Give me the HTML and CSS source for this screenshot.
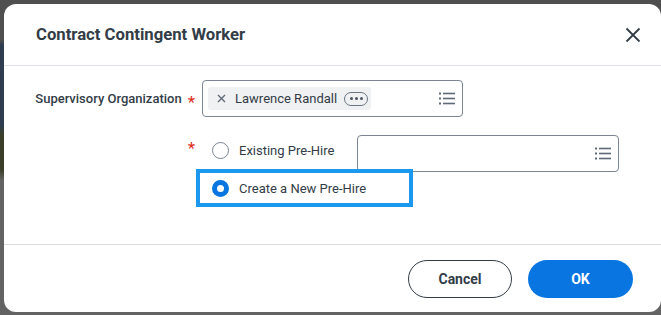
FILE: index.html
```html
<!DOCTYPE html>
<html>
<head>
<meta charset="utf-8">
<link rel="stylesheet" href="styles.css">
</head>
<body>
<div class="dialog">
  <div class="header">
    <h1 class="title">Contract Contingent Worker</h1>
    <button class="close" aria-label="Close">
      <svg width="16" height="16" viewBox="0 0 16 16"><path d="M1.5 1.5 L14.5 14.5 M14.5 1.5 L1.5 14.5" stroke="#333d47" stroke-width="1.8" fill="none"/></svg>
    </button>
  </div>
  <div class="body">
    <div class="row">
      <div class="label"><span class="label-text">Supervisory Organization</span><span class="star">*</span></div>
      <div class="input input-wide">
        <div class="chip">
          <svg class="chip-x" width="9" height="9" viewBox="0 0 9 9"><path d="M1 1 L8 8 M8 1 L1 8" stroke="#5f6a79" stroke-width="1.4" fill="none"/></svg>
          <span class="chip-text">Lawrence Randall</span>
          <span class="pill"><i></i><i></i><i></i></span>
        </div>
        <svg class="list-icon" width="16" height="13" viewBox="0 0 16 13"><g fill="#5f6a79"><rect x="0" y="0.5" width="2" height="2"/><rect x="0" y="5.5" width="2" height="2"/><rect x="0" y="10.5" width="2" height="2"/><rect x="4" y="0.7" width="12" height="1.6"/><rect x="4" y="5.7" width="12" height="1.6"/><rect x="4" y="10.7" width="12" height="1.6"/></g></svg>
      </div>
    </div>
    <div class="row row2">
      <div class="label"><span class="star">*</span></div>
      <div class="options">
        <div class="opt-row">
          <label class="option opt-first"><span class="radio"></span><span class="opt-text">Existing Pre-Hire</span></label>
          <div class="input input-second">
            <svg class="list-icon" width="16" height="13" viewBox="0 0 16 13"><g fill="#5f6a79"><rect x="0" y="0.5" width="2" height="2"/><rect x="0" y="5.5" width="2" height="2"/><rect x="0" y="10.5" width="2" height="2"/><rect x="4" y="0.7" width="12" height="1.6"/><rect x="4" y="5.7" width="12" height="1.6"/><rect x="4" y="10.7" width="12" height="1.6"/></g></svg>
          </div>
        </div>
        <label class="option opt-focus"><span class="radio checked"></span><span class="opt-text">Create a New Pre-Hire</span></label>
      </div>
    </div>
  </div>
  <div class="footer">
    <button class="btn btn-cancel">Cancel</button>
    <button class="btn btn-ok">OK</button>
  </div>
</div>
</body>
</html>
```

FILE: styles.css
```css
* { box-sizing: border-box; }
html, body { margin: 0; padding: 0; }
body {
  width: 661px;
  height: 315px;
  overflow: hidden;
  background: linear-gradient(to bottom, #4f4f4f 0, #4f4f4f 40px, #2f3d50 45px, #2f3d50 125px, #3b3f2a 135px, #3b3f2a 170px, #636363 180px, #636363 100%);
  font-family: Roboto, "Liberation Sans", sans-serif;
  color: #333d47;
  padding: 4px 0 0 4px;
}
.dialog {
  width: 657px;
  height: 308px;
  background: #fff;
  border-radius: 12px;
  display: flex;
  flex-direction: column;
}
.header {
  height: 62px;
  border-bottom: 1px solid #dfe2e6;
  display: flex;
  align-items: center;
  justify-content: space-between;
  padding: 0 20px 0 32px;
}
.title {
  margin: 0;
  font-size: 16.7px;
  font-weight: 700;
  color: #333d47;
}
.close {
  border: 0;
  background: none;
  padding: 0;
  width: 16px;
  height: 16px;
  display: flex;
}
.body {
  flex: 1;
  padding: 14px 0 0 32px;
}
.row {
  display: flex;
  align-items: center;
}
.row2 {
  align-items: flex-start;
  margin-top: 18px;
}
.label {
  width: 166px;
  flex: none;
  display: flex;
  justify-content: flex-end;
  align-items: center;
  padding-right: 7px;
  font-size: 13px;
  font-weight: 500;
  color: #333d47;
  white-space: nowrap;
}
.label-text { margin-right: 6px; }
.star {
  color: #de2e21;
  font-size: 17px;
  font-weight: 400;
  line-height: 1;
  height: 12px;
  margin-top: 3px;
}
.row2 .star { margin-top: 5px; }
.input {
  border: 1px solid #7b8593;
  border-radius: 4px;
  display: flex;
  align-items: center;
  justify-content: space-between;
}
.input-wide {
  width: 261px;
  height: 37px;
  padding: 0 7px 0 5px;
}
.input-second {
  width: 262px;
  height: 37px;
  justify-content: flex-end;
  padding-right: 7px;
}
.chip {
  height: 23px;
  width: 163px;
  background: #f0f1f2;
  border-radius: 3px;
  display: flex;
  align-items: center;
  padding-left: 9px;
}
.chip-x { margin-right: 9px; }
.chip-text {
  font-size: 13px;
  color: #333d47;
  margin-right: 7px;
}
.pill {
  width: 24px;
  height: 14px;
  border: 1px solid #6b7685;
  border-radius: 7px;
  display: flex;
  align-items: center;
  justify-content: center;
  gap: 2px;
}
.pill i {
  width: 3px;
  height: 3px;
  border-radius: 50%;
  background: #4a5563;
  display: block;
}
.options {
  display: flex;
  flex-direction: column;
}
.opt-row {
  display: flex;
  align-items: flex-start;
}
.option {
  display: flex;
  align-items: center;
  height: 30px;
  padding-left: 10px;
  font-size: 13px;
  color: #333d47;
}
.opt-first { width: 155px; }
.opt-focus {
  width: 209px;
  margin-top: 1px;
  margin-left: -2px;
  padding-left: 12px;
  outline: 4px solid #1d98ef;
}
.radio {
  width: 17px;
  height: 17px;
  border-radius: 50%;
  border: 1.5px solid #7b8593;
  margin-right: 10px;
  flex: none;
}
.radio.checked {
  border: 5px solid #0875e1;
}
.footer {
  border-top: 1px solid #dcdcdc;
  height: 68px;
  display: flex;
  justify-content: flex-end;
  align-items: flex-start;
  padding: 15px 28px 0 0;
  gap: 16px;
}
.btn {
  height: 38px;
  border-radius: 19px;
  font-family: Roboto, "Liberation Sans", sans-serif;
  font-size: 14px;
  font-weight: 700;
}
.btn-cancel {
  width: 104px;
  background: #fff;
  border: 1px solid #333d47;
  color: #333d47;
}
.btn-ok {
  width: 105px;
  background: #0875e1;
  border: 0;
  color: #fff;
}
```
